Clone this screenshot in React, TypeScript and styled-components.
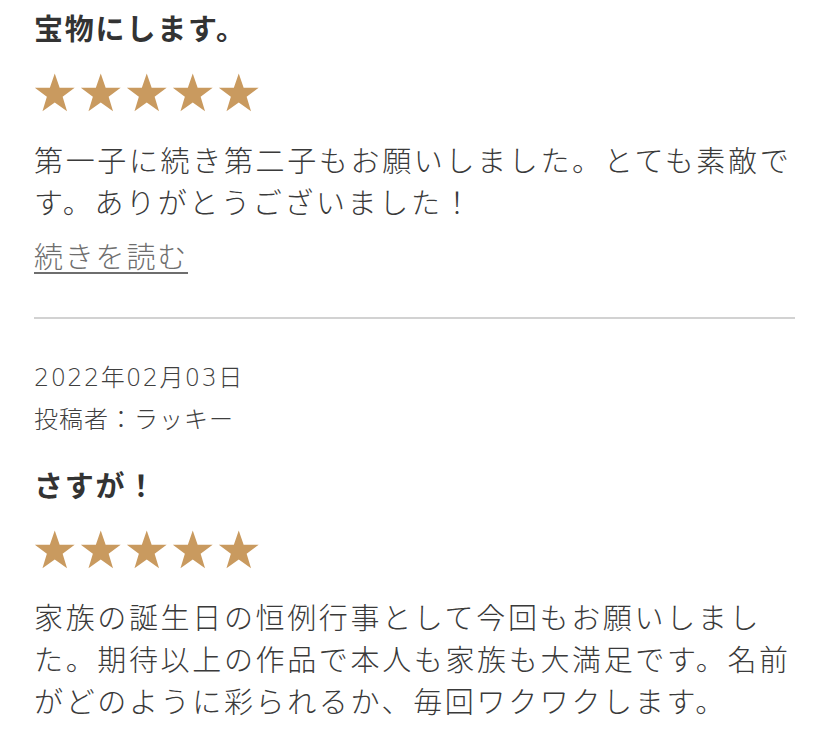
import React from "react";
import styled, { createGlobalStyle } from "styled-components";

const Global = createGlobalStyle`
  html, body { margin: 0; padding: 0; background: #ffffff; }
  body {
    font-family: "Noto Sans CJK JP", "Noto Sans", sans-serif;
    color: #333333;
    -webkit-font-smoothing: antialiased;
  }
`;

const Page = styled.div`
  padding: 7px 32px 0 34px;
  display: flex;
  flex-direction: column;
`;

const Review = styled.section`
  display: flex;
  flex-direction: column;
`;

const Meta = styled.div`
  font-family: "DejaVu Sans", "Noto Sans CJK JP", sans-serif;
  font-size: 24px;
  line-height: 40px;
  letter-spacing: 1.4px;
  color: #3f3f3f;
  font-weight: 300;
`;

const MetaName = styled.div`
  font-family: "Noto Sans CJK JP", sans-serif;
  font-size: 24px;
  line-height: 40px;
  letter-spacing: 1px;
  color: #3f3f3f;
  font-weight: 300;
`;

const Title = styled.h3<{ $gap: number }>`
  margin: ${(p) => p.$gap}px 0 0;
  font-size: 29px;
  line-height: 40px;
  font-weight: 700;
  letter-spacing: 1.8px;
  color: #333333;
`;

const Stars = styled.div`
  display: flex;
  gap: 4.5px;
  margin-top: 25px;
  height: 41px;
`;

const Body = styled.p`
  margin: 25px 0 0;
  font-size: 29px;
  line-height: 42px;
  letter-spacing: 2.65px;
  color: #3a3a3a;
  font-weight: 300;
  line-break: strict;
`;

const More = styled.a`
  display: inline-block;
  align-self: flex-start;
  margin-top: 12px;
  font-size: 29px;
  line-height: 42px;
  letter-spacing: 1.8px;
  font-weight: 300;
  color: #6e6e6e;
  text-decoration: underline;
  text-decoration-thickness: 2px;
  text-underline-offset: 4px;
`;

const Divider = styled.hr`
  border: 0;
  height: 2px;
  background: #d2d2d2;
  margin: 41px 0 39px;
  width: 761px;
`;

const Star = () => (
  <svg width="41.5" height="41" viewBox="0 0 100 96" aria-hidden="true">
    <polygon
      points="50,2 61.8,36.5 98,36.8 69,58.4 79.6,93 50,72.3 20.4,93 31,58.4 2,36.8 38.2,36.5"
      fill="#c99a5f"
    />
  </svg>
);

const Rating = () => (
  <Stars>
    {[0, 1, 2, 3, 4].map((i) => (
      <Star key={i} />
    ))}
  </Stars>
);

export default function App() {
  return (
    <>
      <Global />
      <Page>
        <Review>
          <Title $gap={0}>宝物にします。</Title>
          <Rating />
          <Body>第一子に続き第二子もお願いしました。とても素敵です。ありがとうございました！</Body>
          <More href="#">続きを読む</More>
        </Review>
        <Divider />
        <Review>
          <Meta>2022年02月03日</Meta>
          <MetaName>投稿者：ラッキー</MetaName>
          <Title $gap={26}>さすが！</Title>
          <Rating />
          <Body>家族の誕生日の恒例行事として今回もお願いしました。期待以上の作品で本人も家族も大満足です。名前がどのように彩られるか、毎回ワクワクします。</Body>
        </Review>
      </Page>
    </>
  );
}
